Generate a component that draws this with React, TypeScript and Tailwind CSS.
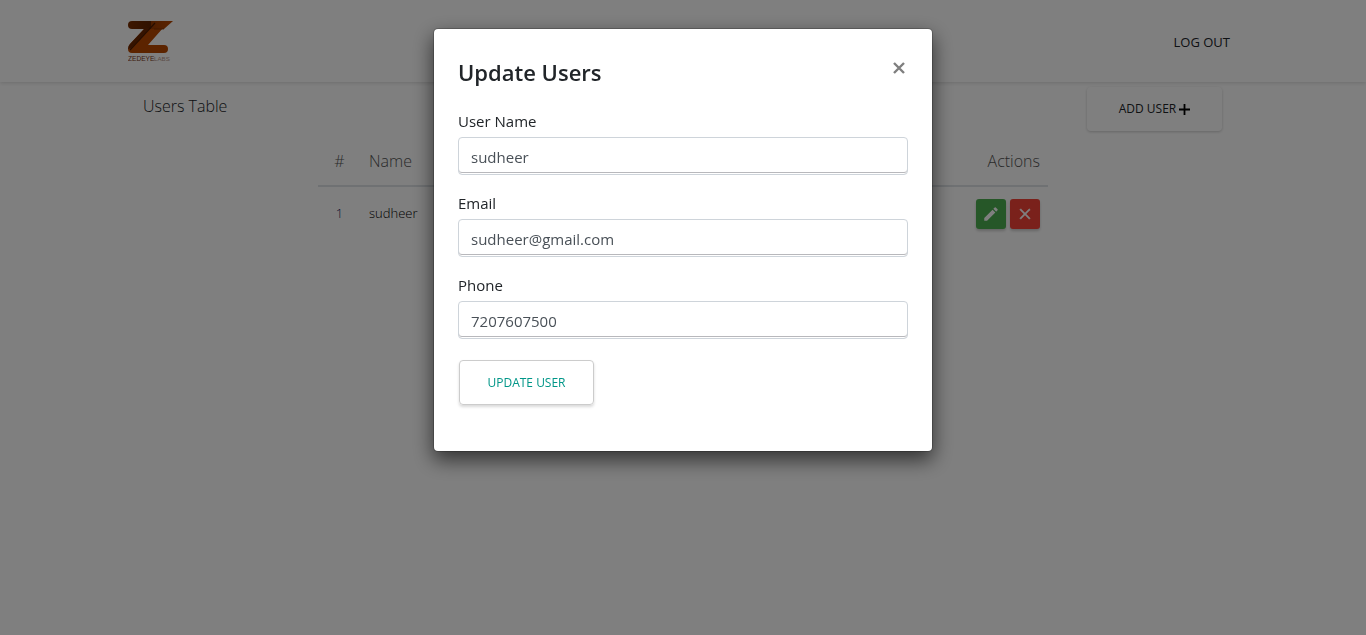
import React, { useState } from "react";

function Logo() {
  return (
    <svg viewBox="0 0 46 42" className="h-[42px] w-[46px]" role="img" aria-label="Zedeye Labs">
      <defs>
        <linearGradient id="bar" x1="0" y1="0" x2="1" y2="0">
          <stop offset="0" stopColor="#7a2e00" />
          <stop offset="0.5" stopColor="#602400" />
          <stop offset="0.52" stopColor="#9c3c00" />
          <stop offset="1" stopColor="#b84800" />
        </linearGradient>
      </defs>
      <path d="M35 8 20 25H36Q40 25 40 29Q40 33 36 33H4Q0 33 0 29Q0 26 2 24L16 9Z" fill="#b84800" />
      <path d="M4 1H45L36 9H4Q0 9 0 5Q0 1 4 1Z" fill="url(#bar)" />
      <path d="M17 8H22L3 28 0 29Q0 26 2 24Z" fill="#6a2600" />
      <path d="M27 3 2 30" stroke="#4c1c00" strokeWidth="1.2" />
      <path d="M26 9H36" stroke="#7c3000" strokeWidth="0.8" />
      <text x="0" y="41" fontFamily="Liberation Sans, sans-serif" fontSize="6.6" fill="#7a3820">ZEDEYE</text>
      <text x="26" y="41" fontFamily="Liberation Sans, sans-serif" fontSize="6.2" fill="#b7978c">LABS</text>
    </svg>
  );
}

type FieldProps = {
  id: string;
  label: string;
  type: string;
  value: string;
  onChange: (value: string) => void;
};

function Field({ id, label, type, value, onChange }: FieldProps) {
  return (
    <div className="mb-4 flex flex-col gap-1">
      <label htmlFor={id} className="text-[15px] leading-6 text-[#212529]">{label}</label>
      <input
        id={id}
        type={type}
        value={value}
        onChange={(event) => onChange(event.target.value)}
        className="h-[38px] w-full rounded-[4px] border border-[#ced4da] bg-white px-3 pt-px text-[15px] text-[#495057] shadow-[inset_0_-1px_0_#fff,inset_0_-2px_0_#b8b8bc] outline-none"
      />
    </div>
  );
}

export default function App() {
  const [name, setName] = useState("sudheer");
  const [email, setEmail] = useState("sudheer@gmail.com");
  const [phone, setPhone] = useState("7207607500");

  return (
    <div className="min-h-screen bg-white font-['Open_Sans',sans-serif] text-[#212529]">
      <header className="shadow-[0_1px_4px_rgba(0,0,0,0.15)]">
        <nav className="mx-auto flex h-[82px] max-w-[1140px] items-center justify-between px-[15px]">
          <a href="#home"><Logo /></a>
          <a href="#logout" className="px-2 pt-[3px] text-[13px] text-[#212529]">LOG OUT</a>
        </nav>
      </header>

      <main className="mx-auto max-w-[1140px] px-[30px]">
        <div className="flex items-start justify-between pt-[5px]">
          <h1 className="pt-[5px] text-[16px] leading-7 font-light">Users Table</h1>
          <button type="button" className="mr-px flex h-11 w-[135px] items-center justify-center gap-[3px] rounded-[4px] text-[12px] text-[#212529] shadow-[0_1px_3px_rgba(0,0,0,0.2)]">
            ADD USER
            <svg viewBox="0 0 11 11" className="size-[11px] text-black" aria-hidden="true">
              <path d="M5.5 0V11M0 5.5H11" stroke="currentColor" strokeWidth="1.8" />
            </svg>
          </button>
        </div>
        <table className="mx-auto mt-[5px] w-full max-w-[730px] text-left">
          <thead>
            <tr className="h-[50px] border-b-2 border-[#dee2e6] text-[16px] font-light text-[#555]">
              <th className="w-[43px] text-center font-light">#</th>
              <th className="px-2 font-light">Name</th>
              <th className="px-2 text-right font-light">Actions</th>
            </tr>
          </thead>
          <tbody>
            <tr className="h-[54px] text-[13px] font-light text-black">
              <td className="text-center text-[#212160]">1</td>
              <td className="px-2">sudheer</td>
              <td className="px-2">
                <div className="flex justify-end gap-1">
                  <button type="button" aria-label="Edit user" className="flex size-[30px] items-center justify-center rounded-[3px] bg-[#4caf50] text-white shadow-[0_2px_3px_rgba(0,0,0,0.2)]">
                    <svg viewBox="0 0 24 24" className="size-[18px]" fill="currentColor" aria-hidden="true">
                      <path d="M3 17.25V21h3.75L17.81 9.94l-3.75-3.75L3 17.25zM20.71 7.04a1 1 0 0 0 0-1.41l-2.34-2.34a1 1 0 0 0-1.41 0l-1.83 1.83 3.75 3.75 1.83-1.83z" />
                    </svg>
                  </button>
                  <button type="button" aria-label="Delete user" className="flex size-[30px] items-center justify-center rounded-[3px] bg-[#f44336] text-white shadow-[0_2px_3px_rgba(0,0,0,0.2)]">
                    <svg viewBox="0 0 24 24" className="size-[18px]" fill="currentColor" stroke="currentColor" strokeWidth="0.6" aria-hidden="true">
                      <path d="M19 6.41 17.59 5 12 10.59 6.41 5 5 6.41 10.59 12 5 17.59 6.41 19 12 13.41 17.59 19 19 17.59 13.41 12z" />
                    </svg>
                  </button>
                </div>
              </td>
            </tr>
          </tbody>
        </table>
      </main>

      <div className="fixed inset-0 z-10 flex items-start justify-center overflow-y-auto bg-black/50 pt-7">
        <section
          role="dialog"
          aria-modal="true"
          aria-labelledby="dialog-title"
          className="w-full max-w-[500px] rounded-[5px] border border-black/20 bg-white bg-clip-padding px-6 pt-6 pb-[46px] shadow-[0_8px_20px_rgba(0,0,0,0.6)]"
        >
          <div className="flex h-10 items-start justify-between">
            <h2 id="dialog-title" className="text-[22px] leading-[38px] font-semibold">Update Users</h2>
            <button type="button" aria-label="Close" className="flex h-[30px] w-[18px] items-center justify-center text-[#7f7f7f]">
              <svg viewBox="0 0 12 12" className="size-3" aria-hidden="true">
                <path d="M1 1 11 11M11 1 1 11" stroke="currentColor" strokeWidth="2.4" />
              </svg>
            </button>
          </div>
          <form className="pt-4" onSubmit={(event) => event.preventDefault()}>
            <Field id="name" label="User Name" type="text" value={name} onChange={setName} />
            <Field id="email" label="Email" type="email" value={email} onChange={setEmail} />
            <Field id="phone" label="Phone" type="tel" value={phone} onChange={setPhone} />
            <button type="submit" className="mt-[5px] ml-px h-[45px] w-[135px] rounded-[4px] border border-[#ccc] text-[12px] text-[#009688] shadow-[0_2px_3px_rgba(0,0,0,0.15)]">
              UPDATE USER
            </button>
          </form>
        </section>
      </div>
    </div>
  );
}
